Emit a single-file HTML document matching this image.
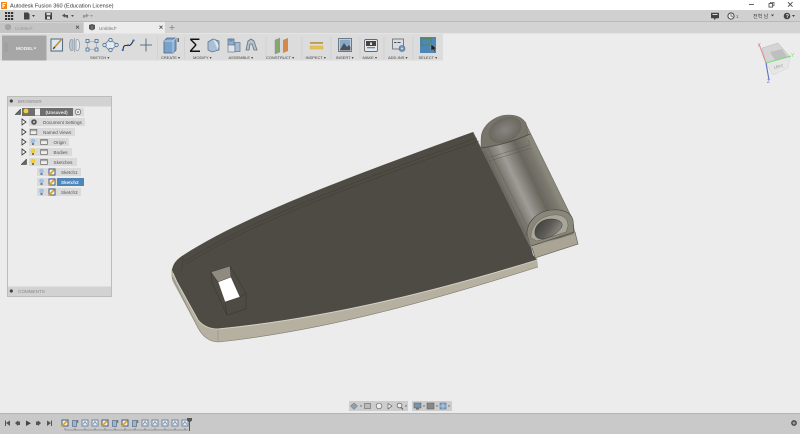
<!DOCTYPE html>
<html><head><meta charset="utf-8"><style>
html,body{margin:0;padding:0;background:#ececec;width:800px;height:434px;overflow:hidden}
svg{display:block}
text{font-family:"Liberation Sans","Noto Sans CJK KR",sans-serif}
</style></head><body>
<svg width="800" height="434" viewBox="0 0 800 434" xmlns="http://www.w3.org/2000/svg">
<defs>
<linearGradient id="cyl" gradientUnits="userSpaceOnUse" x1="492" y1="172" x2="536" y2="151">
<stop offset="0" stop-color="#6c6961"/><stop offset=".15" stop-color="#7a776f"/><stop offset=".36" stop-color="#9f9d97"/><stop offset=".68" stop-color="#69665e"/><stop offset=".9" stop-color="#7c7970"/><stop offset="1" stop-color="#8a877b"/>
</linearGradient>
<linearGradient id="hole" x1="0" y1="0" x2="1" y2=".5"><stop offset="0" stop-color="#3a3833"/><stop offset=".6" stop-color="#5f5d57"/><stop offset="1" stop-color="#8d8b85"/></linearGradient>
<radialGradient id="hole2" cx=".5" cy=".5" r=".6"><stop offset="0" stop-color="#878580"/><stop offset="1" stop-color="#66635b"/></radialGradient>
<symbol id="sk" viewBox="0 0 8 8"><rect x=".5" y=".5" width="7" height="7" fill="#3d5f86"/><rect x="1.500" y="1.500" width="5" height="5" fill="#eef0f2"/><path d="M1 7L6 2" stroke="#e8a020" stroke-width="1.600"/></symbol>
<symbol id="doc" viewBox="0 0 8 8"><rect x="1" y="1" width="6" height="6" fill="#e8edf2" stroke="#5b7491" stroke-width=".8"/><path d="M2 5.500L4 2.500L6 5.500" stroke="#6d8cb0" fill="none" stroke-width=".8"/></symbol>
<symbol id="box" viewBox="0 0 8 8"><rect x="1.500" y="1.500" width="4" height="6" fill="#9fb6cc" stroke="#566f8a" stroke-width=".7"/><rect x="6" y="1" width="1.300" height="3" fill="#777"/></symbol>
<symbol id="bulbB" viewBox="0 0 8 8"><circle cx="4" cy="3" r="2.400" fill="#9fc3e8"/><rect x="3" y="5" width="2" height="2" fill="#777"/></symbol>
<symbol id="bulbY" viewBox="0 0 8 8"><circle cx="4" cy="3" r="2.400" fill="#f3cf3a"/><rect x="3" y="5" width="2" height="2" fill="#777"/></symbol>
<symbol id="fold" viewBox="0 0 8 8"><rect x=".7" y="1.500" width="6.600" height="5" fill="#eee" stroke="#666" stroke-width=".7"/><path d="M.7 2.800H7.300" stroke="#666" stroke-width=".6"/></symbol>
<symbol id="tri" viewBox="0 0 8 8"><path d="M2 1L6 4L2 7Z" fill="#fafafa" stroke="#333" stroke-width=".8"/></symbol>
<symbol id="trid" viewBox="0 0 8 8"><path d="M1 6.500L6.500 1V6.500Z" fill="#666" stroke="#333" stroke-width=".5"/></symbol>
</defs>

<!-- chrome backgrounds -->
<rect width="800" height="434" fill="#ececec"/>
<rect width="800" height="10" fill="#fff"/>
<rect y="10" width="800" height="12" fill="#d0d0d0"/>
<rect y="21" width="800" height="1" fill="#b9b9b9"/>
<rect y="22" width="800" height="11" fill="#d3d3d3"/>
<rect y="33" width="800" height="1" fill="#e4e4e4"/>
<!-- title bar -->
<rect x="1" y="2" width="6" height="7" fill="#f08a1d"/><path d="M3 3.500H6M3 3.500V8M3 5.500H5" stroke="#fff" stroke-width="1"/>
<text x="10" y="7.300" font-size="5.600" fill="#333">Autodesk Fusion 360 (Education License)</text>
<path d="M749 4.500H754" stroke="#555" stroke-width=".9"/>
<rect x="769" y="3.500" width="3.600" height="3.600" fill="none" stroke="#444" stroke-width=".8"/><path d="M770.500 3V2.300H774V5.800H773" fill="none" stroke="#444" stroke-width=".7"/>
<path d="M788 2.200L792.500 6.700M792.500 2.200L788 6.700" stroke="#444" stroke-width=".9"/>
<!-- menu row -->
<g fill="#333"><rect x="5" y="12" width="2.200" height="2"/><rect x="8" y="12" width="2.200" height="2"/><rect x="11" y="12" width="2.200" height="2"/><rect x="5" y="15" width="2.200" height="2"/><rect x="8" y="15" width="2.200" height="2"/><rect x="11" y="15" width="2.200" height="2"/><rect x="5" y="18" width="2.200" height="2"/><rect x="8" y="18" width="2.200" height="2"/><rect x="11" y="18" width="2.200" height="2"/></g>
<path d="M24 12.500H28L29.500 14V19.500H24Z" fill="#444"/><path d="M32 15H35L33.500 17Z" fill="#444"/>
<rect x="45" y="12.500" width="7" height="7" fill="#444"/><rect x="46.500" y="13" width="4" height="2.200" fill="#ddd"/><rect x="47" y="16.500" width="3" height="2.500" fill="#ddd"/>
<path d="M62 15.500L65 13.500V15H68V18H66.500V16.700H65V17.600Z" fill="#555"/><path d="M71 15H74L72.500 17Z" fill="#555"/>
<path d="M86 15.500L83 13.500V15H80V18H81.500V16.700H83V17.600Z" fill="#999" transform="translate(3 0)"/><path d="M90 15H93L91.500 17Z" fill="#999"/>
<!-- right menu -->
<rect x="711" y="12.800" width="8" height="5.400" fill="#444" rx=".5"/><rect x="712.500" y="14" width="5" height="1" fill="#ddd"/><path d="M714 18V20L716.500 18Z" fill="#444"/>
<circle cx="731" cy="16" r="3.100" fill="#f0f0f0" stroke="#444" stroke-width="1"/><path d="M731 14V16.200H733" stroke="#444" fill="none" stroke-width=".7"/>
<text x="736" y="18" font-size="4.500" fill="#555">1</text>
<text x="753" y="17.800" font-size="5" fill="#444">전혁 남</text>
<path d="M771 14.500H774L772.500 16.500Z" fill="#444"/>
<circle cx="787" cy="16" r="3.300" fill="#444"/><text x="785.600" y="18.200" font-size="5.500" fill="#eee" font-weight="bold">?</text>
<path d="M792 15H795L793.500 17Z" fill="#444"/>
<!-- tabs -->
<rect x="0" y="23" width="83" height="10" fill="#c4c4c4"/>
<rect x="84" y="22" width="81" height="11" fill="#ececec"/>
<path d="M5 25L8 24L11 25V29L8 30.500L5 29Z" fill="#a6a6a6"/>
<text x="15" y="30" font-size="4.700" fill="#9a9a9a">Untitled*</text>
<path d="M76 25.700L79 28.700M79 25.700L76 28.700" stroke="#555" stroke-width=".8"/>
<path d="M89 25L92 24L95 25V29L92 30.500L89 29Z" fill="#555"/><path d="M92 26V30" stroke="#ccc" stroke-width=".4"/>
<text x="99" y="30" font-size="4.700" fill="#777">Untitled*</text>
<path d="M159.500 25.700L162.500 28.700M162.500 25.700L159.500 28.700" stroke="#555" stroke-width=".8"/>
<path d="M172 25V30M169.500 27.500H174.500" stroke="#888" stroke-width=".8"/>
<!-- toolbar -->
<rect x="0" y="34" width="443" height="26.500" fill="#dcdcdc"/>
<rect x="2" y="35.500" width="44.500" height="25" fill="#a6a6a6"/>
<path d="M5 43V52M7 43V52" stroke="#959595" stroke-width=".7"/>
<text x="16" y="49.800" font-size="4.800" font-weight="bold" fill="#f0f0f0">MODEL</text>
<path d="M33.500 47.500H36.500L35 49.300Z" fill="#f0f0f0"/>
<!-- separators -->
<path d="M157.500 37V59M184.500 37V59M266 37V59M302 37V59M331 37V59M360 37V59M384 37V59M413 37V59" stroke="#cdcdcd" stroke-width=".7"/>
<!-- sketch icons -->
<rect x="51" y="39" width="11.500" height="12" fill="#dfe7ee" stroke="#5d6f80" stroke-width="1.100"/><path d="M53 49L61 40" stroke="#c98a2b" stroke-width="1.500"/><path d="M53 49L54 46.500L55.500 48Z" fill="#333"/>
<path d="M71 39.500C69 41 69 49 71 50.500L73 50V40Z" fill="#b5c5d4" stroke="#7a8b9b" stroke-width=".6"/><path d="M78 39.500C80 41 80 49 78 50.500L76 50V40Z" fill="#e2e7ec" stroke="#7a8b9b" stroke-width=".6"/><path d="M74.500 38V52" stroke="#8a8a8a" stroke-width=".6"/>
<path d="M88 41.500H96M88 49.500H96M87.500 42V49M96.500 42V49" stroke="#9bb0c4" stroke-width=".8"/><g fill="#dbe6f0" stroke="#4d6d8f" stroke-width=".8"><rect x="86" y="39.500" width="3" height="3"/><rect x="95" y="39.500" width="3" height="3"/><rect x="86" y="48" width="3" height="3"/><rect x="95" y="48" width="3" height="3"/></g>
<path d="M110 39L117 45L110 51L104 45Z" fill="#e3ebf2" stroke="#6f8ba6" stroke-width=".9"/><g fill="#dbe6f0" stroke="#4d6d8f" stroke-width=".8"><circle cx="110.500" cy="40" r="1.700"/><circle cx="110.500" cy="50" r="1.700"/><circle cx="104.500" cy="45" r="1.700"/><circle cx="116.500" cy="45" r="1.700"/></g>
<path d="M123 50C124 40 129 51 133 41" fill="none" stroke="#333" stroke-width="1.100"/><circle cx="122.800" cy="50" r="1.100" fill="#2f6fc4"/><circle cx="133.500" cy="40.500" r="1.100" fill="#2f6fc4"/><circle cx="128" cy="45" r=".9" fill="#2f6fc4"/>
<path d="M146 38.500V51.500M140 45H152" stroke="#5d7288" stroke-width="1"/>
<!-- create -->
<path d="M164 41L167 38H176V50L173 53H164Z" fill="#7ba2c9" stroke="#46678a" stroke-width=".8"/><path d="M164 41H173V53M173 41L176 38" fill="none" stroke="#d9e6f2" stroke-width=".7"/><rect x="177.500" y="38" width="1.500" height="4" fill="#666"/>
<!-- modify -->
<text x="189" y="52" font-size="19" font-family="Liberation Serif" fill="#111">Σ</text>
<path d="M208 42L213 39L219 41V50L212 52L208 50Z" fill="#a9c0d6" stroke="#5e7890" stroke-width=".8"/><path d="M213 39C219 41 220 46 218 50" fill="#dbe5ee" stroke="#5e7890" stroke-width=".6"/>
<!-- assemble -->
<rect x="228" y="39" width="6" height="6" fill="#92b0cc" stroke="#4f6c88" stroke-width=".7"/><circle cx="231" cy="40" r="1.800" fill="#6b8fb3"/><rect x="228" y="45" width="7" height="7" fill="#dfe4ea" stroke="#6e7f90" stroke-width=".7"/><rect x="235" y="42.500" width="5" height="9" fill="#a7bdd2" stroke="#5e7890" stroke-width=".7"/>
<path d="M246 50L248 41L251 39L254 41L257 50L254 50L252 44L250 44L249 50Z" fill="#b5c3d0" stroke="#62727f" stroke-width=".8"/>
<!-- construct -->
<path d="M275 40L280 38V52L275 54Z" fill="#86a86f" stroke="#789" stroke-width=".4"/><path d="M280 38L283 40V52L280 52Z" fill="#d4d8d8"/><path d="M283 40L288 38V51L283 53Z" fill="#d6874a"/>
<text x="266" y="59" font-size="4" fill="#444">CONSTRUCT ▾</text>
<!-- inspect -->
<rect x="310" y="42" width="13" height="1.800" fill="#b59b53"/><rect x="310" y="46" width="13" height="3" fill="#e5c253" stroke="#bba040" stroke-width=".3"/>
<text x="305.500" y="59" font-size="4" fill="#444">INSPECT ▾</text>
<!-- insert -->
<rect x="338.500" y="38.500" width="13" height="13" fill="#eee" stroke="#6c7a88" stroke-width="1"/><rect x="339.500" y="39.500" width="11" height="11" fill="#8aa9c6"/><path d="M339.500 50.500L344 43L347 47L349 45L350.500 47V50.500Z" fill="#49525c"/>
<text x="336" y="59" font-size="4" fill="#444">INSERT ▾</text>
<!-- make -->
<rect x="364.500" y="39.500" width="13" height="12" rx="1.500" fill="#e8e8e8" stroke="#606a74" stroke-width=".9"/><rect x="366" y="41" width="10" height="5" fill="#444"/><rect x="367" y="47" width="8" height="1.300" fill="#5d88b3"/><rect x="370" y="42.500" width="2" height="2.500" fill="#ddd"/>
<text x="362.500" y="59" font-size="4" fill="#444">MAKE ▾</text>
<!-- add-ins -->
<rect x="392.500" y="39" width="11" height="10" fill="#d8dce0" stroke="#6a747e" stroke-width=".9"/><rect x="394" y="42" width="2.500" height=".9" fill="#444"/><rect x="397.500" y="42" width="3" height=".9" fill="#444"/>
<circle cx="402" cy="48.500" r="3" fill="#7696b8" stroke="#4d6d8f" stroke-width=".6"/><circle cx="402" cy="48.500" r=".9" fill="#e3e9ef"/>
<text x="388" y="59" font-size="4" fill="#444">ADD-INS ▾</text>
<!-- select -->
<rect x="420" y="37" width="16" height="16" fill="#4e86b5"/><rect x="421.500" y="38.500" width="9.500" height="6.500" fill="none" stroke="#51895c" stroke-width="1.200"/><path d="M431 44V51L433 49.500L435 52L436 51.500L434.500 49L436.500 48.500Z" fill="#222" stroke="#ddd" stroke-width=".3"/>
<text x="418.500" y="59" font-size="4" fill="#444">SELECT ▾</text>
<text x="90" y="59" font-size="4" fill="#444">SKETCH ▾</text>
<text x="161" y="59" font-size="4" fill="#444">CREATE ▾</text>
<text x="193" y="59" font-size="4" fill="#444">MODIFY ▾</text>
<text x="228.500" y="59" font-size="4" fill="#444">ASSEMBLE ▾</text>

<!-- MODEL 3D -->
<!-- plate side -->
<path d="M172 268C171 273 171 279 174 284L198 328C203 337 210 342 219 342C330 330 440 298 538 267L537 258L218 320L180 270Z" fill="#b5b0a0"/>
<path d="M172 277L198 328C203 337 210 342 219 342C330 330 440 298 538 267" fill="none" stroke="#7d7a70" stroke-width=".6"/>
<path d="M218 329V342" stroke="#8a867b" stroke-width=".5"/>
<!-- flange -->
<path d="M531 247L575 232L578 244L535 258Z" fill="#a9a493"/>
<path d="M532 247.500L535 258L578 244L575 232" fill="none" stroke="#5c5a52" stroke-width=".6"/>
<!-- top face -->
<path d="M172 270C173 264 176 260 182 256C240 218 340 180 473 132L481 148L531 247L533 255L537 260C440 290 330 318 218 329C210 329 203 326 198 320L177 282Z" fill="#4e4b44"/>
<path d="M473 132L481 148" stroke="#777369" stroke-width=".6"/>
<path d="M173 273L177 282L198 320C203 326 210 329 218 329C330 318 440 290 537 260" fill="none" stroke="#d5d2c9" stroke-width=".9"/>
<path d="M184 262C242 224 342 186 477 138M185 265C243 227 343 189 479 141" fill="none" stroke="#393731" stroke-width=".4"/>
<path d="M182 256C183 262 183 268 180 272" fill="none" stroke="#393731" stroke-width=".4"/>
<!-- square hole -->
<path d="M211 272L230 266L231 277L218 282Z" fill="#8f8b80"/>
<path d="M218 282L231 277L240 297L225 302Z" fill="#ffffff"/>
<path d="M211 272L230 266L246 293V309L227 315L212 283ZM218 282L211 272M231 277L230 266M240 297L246 293M225 302L227 315M218 282L231 277L240 297L225 302Z" fill="none" stroke="#2e2c28" stroke-width=".4"/>
<!-- cylinder -->
<path d="M481 138C481 125 495 115 508 115C516 115 522 117 525 122L572 218C575 226 574 232 574 234L530 247L481 148Z" fill="url(#cyl)"/>
<path d="M484 151L531 244M488 148L535 241" stroke="#5a5750" stroke-width=".35" fill="none"/>
<path d="M525 122L572 218" stroke="#5f5c54" stroke-width=".5" fill="none"/>
<!-- far end -->
<path d="M481 140C481 126 495 115 508 115C516 115 522 117 526 123L528 135C516 140 502 144 490 146L481 148Z" fill="#77746a" stroke="#5f5c54" stroke-width=".4"/>
<ellipse cx="505" cy="130" rx="17" ry="11.500" transform="rotate(-27 505 130)" fill="url(#hole2)" stroke="#6a675e" stroke-width=".5"/>
<path d="M481 148C500 146 516 140 530 134" fill="none" stroke="#3b3934" stroke-width=".6"/>
<path d="M487 158L530 145L528 140M489 161L532 148" fill="none" stroke="#5a5750" stroke-width=".4"/>
<!-- near end -->
<path d="M527 232C526 222 537 212 552 210C562 209 570 212 572 218L575 232L531 246Z" fill="#8a877a"/>
<path d="M527 236C526 222 537 211 552 210C562 209 571 212 573 220L574 232L531 246" fill="none" stroke="#46443d" stroke-width=".6"/>
<path d="M531 238C530 226 541 216 553 215C562 214 568 218 568 226L566 232L537 241Z" fill="#a8a59b" stroke="#55534b" stroke-width=".4"/>
<path d="M535 234C534 225 542 219 551 219C558 219 563 222 562 226C560 232 551 237 544 239C538 239 536 238 535 234Z" fill="url(#hole)" stroke="#3b3934" stroke-width=".5"/>

<!-- ViewCube -->
<path d="M762 48L778 43L790 57L766 63Z" fill="#d4d4d4" stroke="#b9b9b9" stroke-width=".5"/>
<path d="M766 63L790 57L788 68L773 75Z" fill="#e6e6e6" stroke="#d4d4d4" stroke-width=".5"/>
<path d="M770 52L782 49L787 57L775 60Z" fill="#b0b0b0" opacity=".6"/>
<text x="774" y="68.500" font-size="3.800" fill="#888" transform="rotate(-8 774 68)">LEFT</text>
<path d="M766 63L759 44" stroke="#d98a8a" stroke-width="1"/>
<path d="M766 63L791 56" stroke="#77dd77" stroke-width="1"/>
<path d="M766 63L769 80" stroke="#5f6fd0" stroke-width="1.100"/>
<text x="757.500" y="47" font-size="5" fill="#d98a8a">X</text>
<text x="791" y="57" font-size="5" fill="#77dd77">Y</text>
<text x="767" y="83" font-size="5" fill="#5f6fd0">Z</text>

<!-- Browser panel -->
<rect x="7.500" y="96.500" width="104" height="200" fill="#ececec" stroke="#bcbcbc"/>
<rect x="8" y="97" width="103" height="9.500" fill="#d2d2d2"/>
<circle cx="11.300" cy="101" r="1.600" fill="#444"/>
<text x="18" y="102.800" font-size="4.600" fill="#888">BROWSER</text>
<rect x="8" y="286.500" width="103" height="9.500" fill="#d2d2d2"/>
<circle cx="11.300" cy="291" r="1.600" fill="#444"/>
<text x="18" y="292.800" font-size="4.600" fill="#888">COMMENTS</text>
<!-- rows -->
<use href="#trid" x="14" y="108" width="8" height="8"/>
<rect x="22" y="108" width="51" height="8" fill="#6e6e6e"/><rect x="73" y="108" width="11" height="8" fill="#dadada"/>
<use href="#bulbY" x="22" y="108" width="8" height="8"/>
<rect x="35" y="108.500" width="5" height="7" fill="#eee"/>
<text x="45.500" y="113.800" font-size="4.600" font-weight="bold" fill="#e4e4e4">(Unsaved)</text>
<circle cx="78" cy="112" r="2.800" fill="#eee" stroke="#555" stroke-width=".6"/><circle cx="78" cy="112" r=".8" fill="#444"/>

<use href="#tri" x="20" y="118" width="8" height="8"/>
<rect x="29" y="118" width="56" height="8" fill="#dadada"/>
<circle cx="34" cy="122" r="2.800" fill="#555"/><circle cx="34" cy="122" r="1" fill="#ccc"/>
<text x="43" y="124" font-size="4.600" fill="#555">Document Settings</text>

<use href="#tri" x="20" y="128" width="8" height="8"/>
<rect x="29" y="128" width="46" height="8" fill="#dadada"/>
<use href="#fold" x="29.500" y="128" width="8" height="8"/>
<text x="43" y="134" font-size="4.600" fill="#555">Named Views</text>

<use href="#tri" x="20" y="138" width="8" height="8"/>
<rect x="29" y="138" width="40" height="8" fill="#dadada"/>
<use href="#bulbB" x="29" y="138" width="8" height="8"/>
<use href="#fold" x="40" y="138" width="8" height="8"/>
<text x="53.500" y="144" font-size="4.600" fill="#555">Origin</text>

<use href="#tri" x="20" y="148" width="8" height="8"/>
<rect x="29" y="148" width="43" height="8" fill="#dadada"/>
<use href="#bulbY" x="29" y="148" width="8" height="8"/>
<use href="#fold" x="40" y="148" width="8" height="8"/>
<text x="53.500" y="154" font-size="4.600" fill="#555">Bodies</text>

<use href="#trid" x="20" y="158" width="8" height="8"/>
<rect x="29" y="158" width="48" height="8" fill="#dadada"/>
<use href="#bulbY" x="29" y="158" width="8" height="8"/>
<use href="#fold" x="40" y="158" width="8" height="8"/>
<text x="53.500" y="164" font-size="4.600" fill="#555">Sketches</text>

<rect x="37" y="168" width="44" height="8" fill="#dadada"/>
<use href="#bulbB" x="37.500" y="168" width="8" height="8"/>
<use href="#sk" x="48" y="168" width="8" height="8"/>
<text x="61" y="174" font-size="4.600" fill="#555">Sketch1</text>

<rect x="37" y="178" width="47" height="8" fill="#dadada"/><rect x="57" y="178" width="27" height="8" fill="#4f86b8"/>
<use href="#bulbB" x="37.500" y="178" width="8" height="8"/>
<use href="#sk" x="48" y="178" width="8" height="8"/>
<text x="61" y="184" font-size="4.600" fill="#eef" font-weight="bold">Sketch2</text>

<rect x="37" y="188" width="44" height="8" fill="#dadada"/>
<use href="#bulbB" x="37.500" y="188" width="8" height="8"/>
<use href="#sk" x="48" y="188" width="8" height="8"/>
<text x="61" y="194" font-size="4.600" fill="#555">Sketch3</text>

<!-- nav bar -->
<rect x="349" y="401" width="59" height="10" fill="#cdcdcd"/>
<rect x="412" y="401" width="40" height="10" fill="#cdcdcd"/>
<path d="M354 403L357.500 406L354 409.500L350.500 406Z" fill="#8ea0b2" stroke="#666" stroke-width=".5"/>
<path d="M360 405.500H362L361 407Z" fill="#555"/>
<rect x="364.500" y="403.500" width="6" height="5" fill="#bbb" stroke="#666" stroke-width=".6"/>
<circle cx="379" cy="406" r="2.800" fill="#eee" stroke="#666" stroke-width=".7"/>
<path d="M388 403.500L392 406L388 409Z" fill="#eee" stroke="#555" stroke-width=".6"/>
<circle cx="399.500" cy="405.500" r="2.400" fill="#eee" stroke="#555" stroke-width=".7"/><path d="M401 407.500L403 409.500" stroke="#555" stroke-width=".9"/>
<path d="M405 405.500H407L406 407Z" fill="#555"/>
<rect x="414" y="403" width="7" height="5" fill="#7a94ae" stroke="#555" stroke-width=".5"/><path d="M416 409H419" stroke="#555"/><path d="M423 405.500H425L424 407Z" fill="#555"/>
<rect x="427" y="403" width="7" height="6" fill="#888" stroke="#555" stroke-width=".5"/><path d="M436 405.500H438L437 407Z" fill="#555"/>
<rect x="440" y="403" width="6" height="6" fill="#7ea6d0" stroke="#47688a" stroke-width=".5"/><path d="M443 403V409M440 406H446" stroke="#dde" stroke-width=".5"/><path d="M448 405.500H450L449 407Z" fill="#555"/>

<!-- timeline -->
<rect y="413" width="800" height="21" fill="#c9c9c9"/>
<rect y="413" width="800" height="1" fill="#b5b5b5"/>
<g fill="#555">
<path d="M5 420.500H6V426H5ZM6 423L10 420.500V426Z"/>
<path d="M15 423L18 420.500V426ZM18 421.500H20V425H18Z"/>
<path d="M26 420.500L31 423.300L26 426Z" fill="#444"/>
<path d="M41 423L38 420.500V426ZM36 421.500H38V425H36Z"/>
<path d="M47 420.500L51 423L47 426ZM51 420.500H52V426H51Z"/>
</g>
<use href="#sk" x="61" y="419" width="8" height="8"/>
<use href="#box" x="71" y="419" width="8" height="8"/>
<use href="#doc" x="81" y="419" width="8" height="8"/>
<use href="#doc" x="91" y="419" width="8" height="8"/>
<use href="#sk" x="101" y="419" width="8" height="8"/>
<use href="#box" x="111" y="419" width="8" height="8"/>
<use href="#sk" x="121" y="419" width="8" height="8"/>
<use href="#box" x="131" y="419" width="8" height="8"/>
<use href="#doc" x="141" y="419" width="8" height="8"/>
<use href="#doc" x="151" y="419" width="8" height="8"/>
<use href="#doc" x="161" y="419" width="8" height="8"/>
<use href="#doc" x="171" y="419" width="8" height="8"/>
<use href="#doc" x="181" y="419" width="8" height="8"/>
<path d="M65 430H188M65 428V430M75 428V430M85 428V430M95 428V430M105 428V430M115 428V430M125 428V430M135 428V430M145 428V430M155 428V430M165 428V430M175 428V430M185 428V430" stroke="#666" stroke-width=".6" fill="none"/>
<path d="M187 418H192V420.500L190 422V431H189V422L187 420.500Z" fill="#555"/>
<circle cx="794" cy="423" r="2.200" fill="#999" stroke="#444" stroke-width="1.300"/>
</svg>
</body></html>
